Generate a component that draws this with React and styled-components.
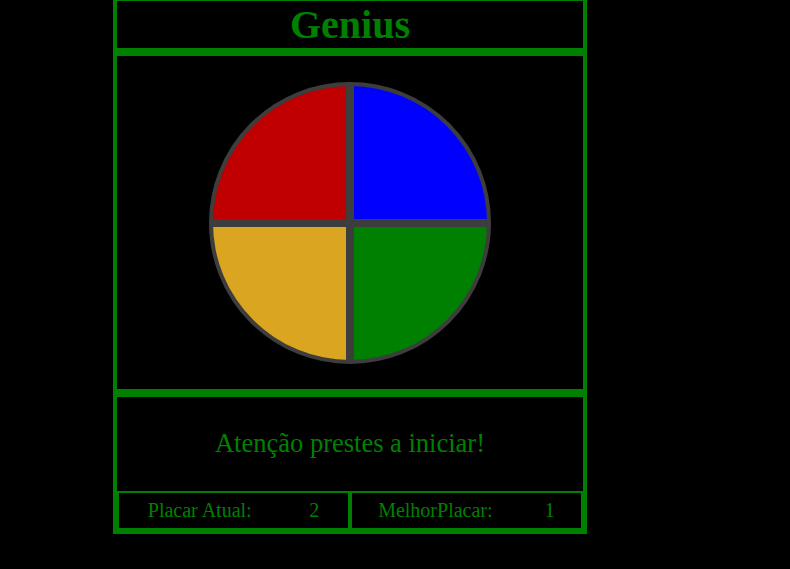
import React from 'react';
import styled, { createGlobalStyle } from 'styled-components';

const GlobalStyle = createGlobalStyle`
  html, body {
    margin: 0;
    padding: 0;
    background-color: #000;
  }
  body {
    font-family: "Liberation Serif", "Times New Roman", serif;
    color: #008000;
  }
`;

const Game = styled.div`
  width: 474px;
  margin-left: 113px;
  margin-top: -3px;
  display: flex;
  flex-direction: column;
`;

const Section = styled.div`
  box-sizing: border-box;
  border: 4px solid #008000;
`;

const Header = styled(Section)`
  height: 55px;
  text-align: center;
  h1 {
    margin: 0;
    font-size: 40px;
    line-height: 47px;
    font-weight: bold;
  }
`;

const Board = styled(Section)`
  height: 341px;
  display: flex;
  align-items: center;
  justify-content: center;
`;

const Circle = styled.div`
  box-sizing: border-box;
  width: 282px;
  height: 282px;
  border: 4px solid #3d3d3d;
  border-radius: 50%;
  background-color: #3d3d3d;
  overflow: hidden;
  display: grid;
  grid-template-columns: 1fr 1fr;
  grid-template-rows: 1fr 1fr;
  gap: 8px;
`;

const Pad = styled.div`
  background-color: ${(p) => p.color};
  cursor: pointer;
`;

const Footer = styled(Section)`
  height: 141px;
  display: flex;
  flex-direction: column;
`;

const Message = styled.div`
  height: 94px;
  display: flex;
  align-items: center;
  justify-content: center;
  font-size: 26.5px;
  padding-bottom: 2px;
  box-sizing: border-box;
`;

const ScoreRow = styled.div`
  display: grid;
  grid-template-columns: 1fr 1fr;
  height: 39px;
`;

const ScoreCell = styled.div`
  box-sizing: border-box;
  border: 2px solid #008000;
  display: flex;
  align-items: center;
  justify-content: space-around;
  font-size: 20px;
`;

export default function App() {
  return (
    <>
      <GlobalStyle />
      <Game>
        <Header>
          <h1>Genius</h1>
        </Header>
        <Board>
          <Circle>
            <Pad color="#c00000" />
            <Pad color="#0000ff" />
            <Pad color="#daa520" />
            <Pad color="#008000" />
          </Circle>
        </Board>
        <Footer>
          <Message>Atenção prestes a iniciar!</Message>
          <ScoreRow>
            <ScoreCell>
              <span>Placar Atual:</span>
              <span>2</span>
            </ScoreCell>
            <ScoreCell>
              <span>MelhorPlacar:</span>
              <span>1</span>
            </ScoreCell>
          </ScoreRow>
        </Footer>
      </Game>
    </>
  );
}
